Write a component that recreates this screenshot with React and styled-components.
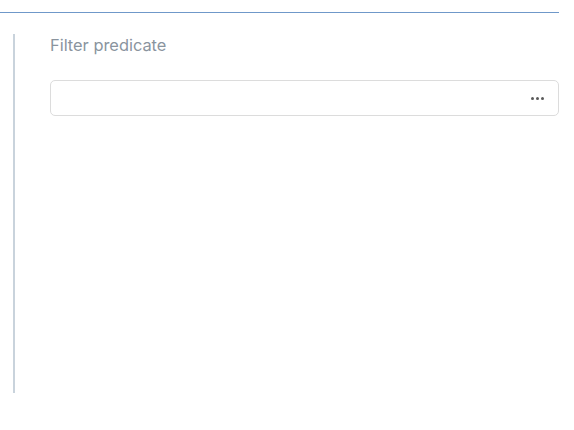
import styled, { createGlobalStyle } from "styled-components";

const Global = createGlobalStyle`
  body {
    margin: 0;
    background: #fff;
    font-family: Inter, "Liberation Sans", sans-serif;
  }
`;

export default function App() {
  return (
    <>
      <Global />
      <Page>
        <TopRule />
        <Panel>
          <Label>Filter predicate</Label>
          <Field>
            <Input type="text" />
            <MoreButton aria-label="More">
              <Dot />
              <Dot />
              <Dot />
            </MoreButton>
          </Field>
        </Panel>
      </Page>
    </>
  );
}

const Page = styled.div`
  width: 559px;
  padding-top: 12px;
`;

const TopRule = styled.div`
  height: 1px;
  background: #6f98c9;
`;

const Panel = styled.div`
  margin: 21px 0 0 13px;
  height: 359px;
  border-left: 2px solid #c9d3dc;
  padding-left: 35px;
  box-sizing: border-box;
`;

const Label = styled.div`
  font-size: 16.4px;
  line-height: 22px;
  color: #8a949e;
  margin-top: 1px;
`;

const Field = styled.div`
  margin-top: 24px;
  height: 36px;
  border: 1px solid #dcdcdc;
  border-radius: 5px;
  box-sizing: border-box;
  display: flex;
  align-items: center;
`;

const Input = styled.input`
  flex: 1;
  border: none;
  outline: none;
  background: transparent;
  height: 100%;
  padding: 0 10px;
  font: inherit;
`;

const MoreButton = styled.button`
  border: none;
  background: transparent;
  display: flex;
  gap: 2px;
  padding: 0 14px 0 10px;
  height: 100%;
  align-items: center;
  cursor: pointer;
`;

const Dot = styled.span`
  width: 3px;
  height: 3px;
  background: #5a5a5a;
  border-radius: 50%;
`;
